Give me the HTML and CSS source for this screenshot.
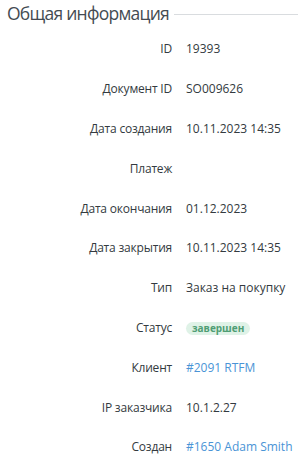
FILE: index.html
```html
<!DOCTYPE html>
<html lang="ru">
<head>
<meta charset="utf-8">
<link rel="stylesheet" href="styles.css">
</head>
<body>
<section class="panel">
  <div class="head">
    <h2 class="title">Общая информация</h2>
    <span class="rule"></span>
  </div>
  <dl class="info">
    <dt>ID</dt><dd>19393</dd>
    <dt>Документ ID</dt><dd>SO009626</dd>
    <dt>Дата создания</dt><dd>10.11.2023 14:35</dd>
    <dt>Платеж</dt><dd></dd>
    <dt>Дата окончания</dt><dd>01.12.2023</dd>
    <dt>Дата закрытия</dt><dd>10.11.2023 14:35</dd>
    <dt>Тип</dt><dd>Заказ на покупку</dd>
    <dt>Статус</dt><dd><span class="badge">завершен</span></dd>
    <dt>Клиент</dt><dd><a class="link" href="#">#2091 RTFM</a></dd>
    <dt>IP заказчика</dt><dd>10.1.2.27</dd>
    <dt>Создан</dt><dd><a class="link" href="#">#1650 Adam Smith</a></dd>
  </dl>
</section>
</body>
</html>
```
FILE: styles.css
```css
html, body {
  margin: 0;
  padding: 0;
  background: #ffffff;
}
body {
  font-family: "Open Sans", sans-serif;
  color: #333a40;
  width: 298px;
  overflow: hidden;
}
.panel {
  padding: 0 0 0 7px;
}
.head {
  display: flex;
  align-items: center;
  gap: 5px;
  height: 26px;
}
.title {
  margin: 0;
  font-size: 17.5px;
  letter-spacing: -0.75px;
  font-weight: 400;
  line-height: 24px;
  color: #444b52;
  white-space: nowrap;
}
.rule {
  flex: 1;
  height: 1px;
  background: #d9dcdf;
  margin-top: 2px;
}
.info {
  margin: 3px 0 0 0;
  display: grid;
  grid-template-columns: 165px 1fr;
  grid-auto-rows: 39.8px;
  column-gap: 14px;
  font-size: 12px;
  align-items: center;
}
.info dt {
  text-align: right;
  color: #333a40;
  letter-spacing: -0.2px;
}
.info dd {
  margin: 0;
  color: #333a40;
  white-space: nowrap;
}
.badge {
  display: inline-block;
  background: #dff2e7;
  color: #4f9e74;
  font-weight: 700;
  font-size: 10px;
  line-height: 13px;
  padding: 0 6px;
  border-radius: 7px;
}
.link {
  color: #4a94d6;
  text-decoration: none;
}
```
